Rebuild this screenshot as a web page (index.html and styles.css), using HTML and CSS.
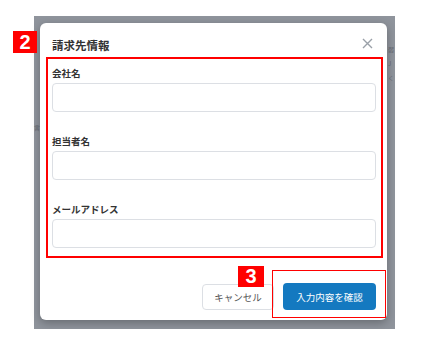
FILE: index.html
```html
<!DOCTYPE html>
<html lang="ja">
<head>
  <meta charset="UTF-8">
  <meta name="viewport" content="width=device-width, initial-scale=1.0">
  <title>請求先情報</title>
  <link rel="stylesheet" href="styles.css">
</head>
<body>
  <div class="backdrop">
    <span class="behind behind-right">弱<br>J<br>く</span>
    <span class="behind behind-left">言</span>

    <div class="modal">
      <span class="badge badge-2">2</span>

      <div class="modal-header">
        <h2 class="modal-title">請求先情報</h2>
        <button class="close-btn" aria-label="閉じる">
          <svg width="11" height="11" viewBox="0 0 11 11">
            <path d="M1 1 L10 10 M10 1 L1 10" stroke="#9aa0a8" stroke-width="1.4" fill="none"/>
          </svg>
        </button>
      </div>

      <div class="form-body">
        <label class="field-label">会社名</label>
        <input class="field-input" type="text">
        <label class="field-label">担当者名</label>
        <input class="field-input" type="text">
        <label class="field-label">メールアドレス</label>
        <input class="field-input" type="email">
      </div>

      <div class="modal-footer">
        <span class="badge badge-3">3</span>
        <button class="cancel-btn">キャンセル</button>
        <div class="confirm-wrap">
          <span class="annot-box"></span>
          <button class="confirm-btn">入力内容を確認</button>
        </div>
      </div>
    </div>
  </div>
</body>
</html>
```

FILE: styles.css
```css
body {
  margin: 0;
  background: #fff;
  font-family: "Noto Sans CJK JP", "Noto Sans", sans-serif;
  color: #333;
}
.backdrop {
  position: relative;
  margin: 16px 0 0 34px;
  width: 361px;
  height: 313px;
  box-sizing: border-box;
  padding: 7px 0 0 6px;
  background: #8f949c;
}
.behind {
  position: absolute;
  font-size: 6px;
  line-height: 14px;
  color: #666a72;
}
.behind-right {
  left: 354px;
  top: 27px;
}
.behind-left {
  left: 0;
  top: 104px;
  line-height: 16px;
}
.modal {
  position: relative;
  width: 347px;
  height: 297px;
  box-sizing: border-box;
  padding: 0 11px 0 12px;
  background: #fff;
  border-radius: 6px;
  box-shadow: 0 3px 10px rgba(0, 0, 0, 0.28);
}
.badge {
  position: absolute;
  background: #ff0000;
  color: #fff;
  font-family: "Liberation Sans", Arial, sans-serif;
  font-weight: bold;
  font-size: 20px;
  line-height: 22px;
  text-align: center;
}
.badge-2 {
  left: -27px;
  top: 8px;
  width: 24px;
  height: 22px;
}
.badge-3 {
  left: 186px;
  top: -17px;
  width: 26px;
  height: 21px;
  line-height: 21px;
}
.modal-header {
  display: flex;
  justify-content: space-between;
  align-items: center;
  padding-top: 14px;
  height: 16px;
  margin-bottom: 4px;
}
.modal-title {
  margin: 0;
  font-size: 11.5px;
  line-height: 16px;
  font-weight: bold;
  color: #333;
}
.close-btn {
  border: none;
  background: none;
  padding: 0;
  margin: -4px 3px 0 0;
  width: 11px;
  height: 11px;
  display: flex;
}
.form-body {
  display: flex;
  flex-direction: column;
  margin: 0 -7px 0 -6px;
  padding: 7px 5px 8px 4px;
  border: 2px solid #ff0000;
}
.field-label {
  font-size: 9.5px;
  line-height: 14px;
  font-weight: bold;
  color: #333;
  margin-bottom: 3px;
}
.field-input {
  height: 29px;
  box-sizing: border-box;
  border: 1px solid #dcdfe4;
  border-radius: 4px;
  background: #fff;
  margin: 0 0 22px;
}
.field-input:last-child {
  margin-bottom: 0;
}
.modal-footer {
  position: relative;
  display: flex;
  justify-content: flex-end;
  align-items: center;
  gap: 9px;
  margin-top: 25px;
}
.cancel-btn {
  width: 72px;
  height: 26px;
  border: 1px solid #dcdfe4;
  border-radius: 4px;
  background: #fff;
  color: #555;
  font-family: inherit;
  font-size: 9.5px;
  padding: 0;
}
.confirm-wrap {
  position: relative;
  display: flex;
}
.annot-box {
  position: absolute;
  left: -11px;
  right: -10px;
  top: -13px;
  bottom: -8px;
  border: 1.5px solid #ff0000;
}
.confirm-btn {
  width: 93px;
  height: 27px;
  border: none;
  border-radius: 4px;
  background: #1479c0;
  color: #fff;
  font-family: inherit;
  font-size: 9.5px;
  padding: 0;
}
```
